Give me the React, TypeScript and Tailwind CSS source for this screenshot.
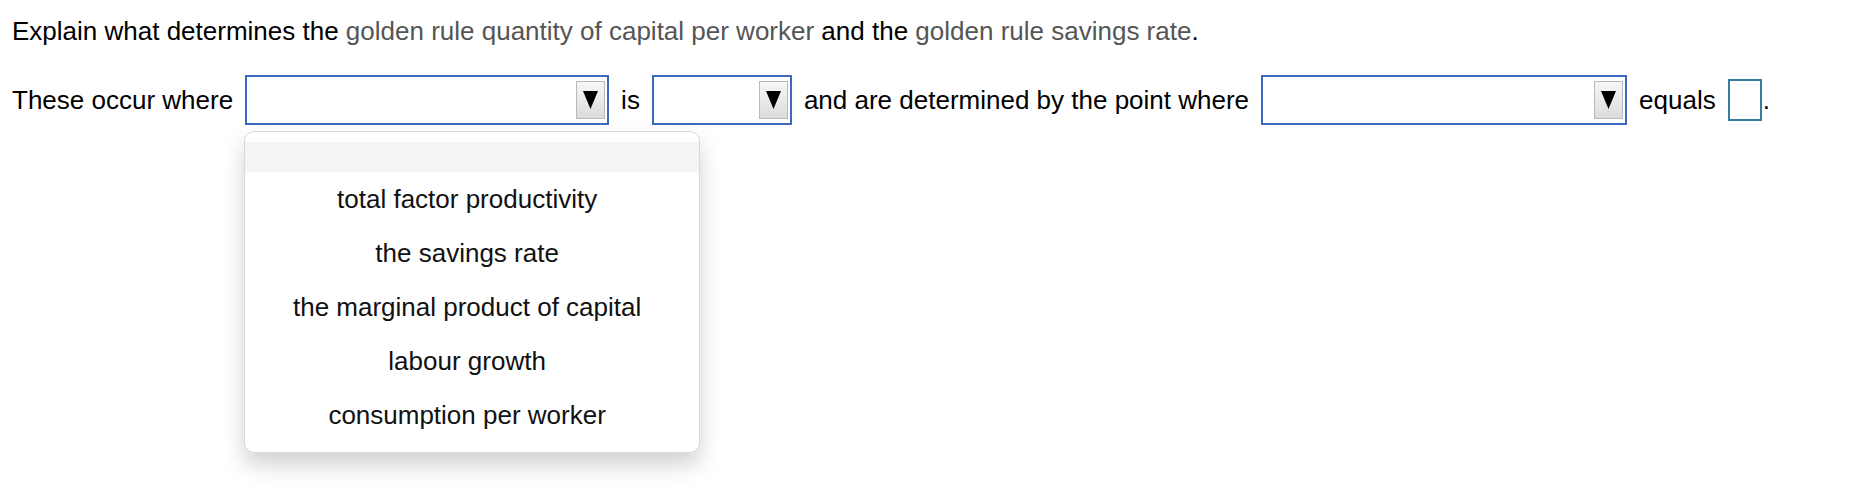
import { useState } from "react";

const options = [
  "total factor productivity",
  "the savings rate",
  "the marginal product of capital",
  "labour growth",
  "consumption per worker",
];

function Arrow() {
  return (
    <span className="absolute right-[2px] top-1/2 flex h-[38px] w-[29px] -translate-y-1/2 items-center justify-center border border-[#b9b9b9] bg-gradient-to-b from-[#f7f7f7] to-[#dcdcdc]">
      <svg width="15" height="18" viewBox="0 0 15 18">
        <polygon points="0,0 15,0 7.5,18" fill="#000" />
      </svg>
    </span>
  );
}

function Select({
  width,
  open = false,
}: {
  width: string;
  open?: boolean;
}) {
  return (
    <div className={`relative h-[50px] shrink-0 border-2 border-[#3f68c6] bg-white ${width}`}>
      <Arrow />
      {open && (
        <div className="absolute left-[-3px] top-[54px] z-10 w-[456px] rounded-[10px] border border-[#d9d9d9] bg-white pt-[10px] pb-[10px] shadow-[0_12px_22px_rgba(0,0,0,0.18)]">
          <div className="h-[30px] bg-[#f4f4f4]" />
          {options.map((o) => (
            <div
              key={o}
              className="flex h-[54px] items-center justify-center pr-[10px] text-[#111]"
            >
              {o}
            </div>
          ))}
        </div>
      )}
    </div>
  );
}

export default function App() {
  const [answer] = useState("");

  return (
    <div
      className="min-h-screen bg-white px-3 pt-4 text-[26px] text-black"
      style={{ fontFamily: '"Liberation Sans", Arial, sans-serif' }}
    >
      <p className="leading-[30px]">
        Explain what determines the{" "}
        <span className="text-[#555]">golden rule quantity of capital per worker</span> and the{" "}
        <span className="text-[#555]">golden rule savings rate</span>.
      </p>

      <div className="mt-[29px] flex items-center gap-3 leading-[30px]">
        <span className="whitespace-nowrap">These occur where</span>
        <Select width="w-[364px]" open />
        <span>is</span>
        <Select width="w-[140px]" />
        <span className="whitespace-nowrap">and are determined by the point where</span>
        <Select width="w-[366px]" />
        <span>equals</span>
        <span className="flex items-center gap-[1px]">
          <span className="flex h-[42px] w-[34px] items-center border-2 border-[#3b7b9b] bg-white">
            {answer}
          </span>
          <span>.</span>
        </span>
      </div>
    </div>
  );
}
